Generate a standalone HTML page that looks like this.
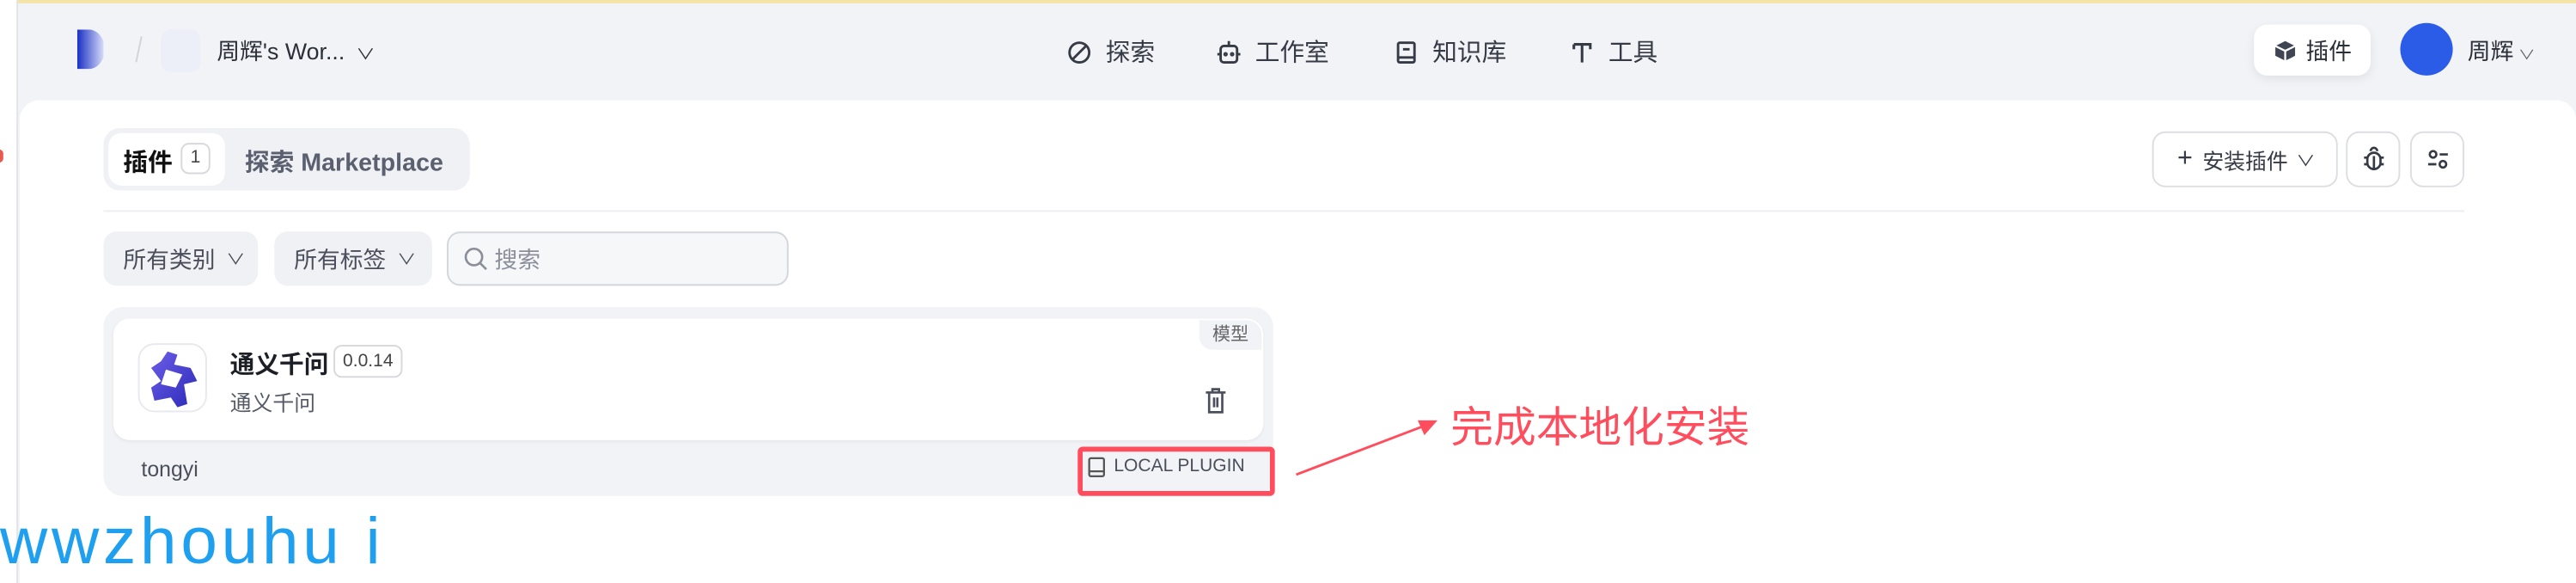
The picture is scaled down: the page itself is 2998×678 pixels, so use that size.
<!DOCTYPE html>
<html><head><meta charset="utf-8"><style>
*{margin:0;padding:0;box-sizing:border-box}
html,body{width:2998px;height:678px;overflow:hidden;background:#fff}
#w{position:absolute;left:0;top:0;width:1568px;height:355px;transform:scale(1.91199,1.9099);transform-origin:0 0;background:#f2f3f7;font-family:"Liberation Sans","Noto Sans CJK SC",sans-serif;color:#1c1f26}
.a{position:absolute}
.nav{font-size:15px;color:#353a45;display:flex;align-items:center;gap:8px}
.btn{position:absolute;background:#fff;border:1px solid #dcdee3;border-radius:8px;display:flex;align-items:center;justify-content:center;font-size:13px;color:#353a45}
.flt{position:absolute;background:#f0f1f4;border-radius:8px;font-size:14px;color:#4a4f5b;display:flex;align-items:center;padding-left:12px;gap:8px}
.chev{font-size:9px;transform:scaleX(1.3)}
</style></head><body><div id="w">
<div class="a" style="left:0;top:0;width:1568px;height:2px;background:#f3e3a6"></div>
<div class="a" style="left:0;top:0;width:11px;height:355px;background:#fff;border-right:1px solid #e3e4e8"></div>
<div class="a" style="left:-3px;top:91px;width:5px;height:8px;border-radius:3px;background:#e85a4f"></div>
<svg class="a" style="left:47px;top:18px" width="16" height="24"><defs><linearGradient id="g" x1="0" x2="1"><stop offset="0" stop-color="#1a2fc4"/><stop offset="1" stop-color="#dfe4fb"/></linearGradient></defs><path d="M0 0H7A9 11 0 0 1 7 24H0Z" fill="url(#g)"/></svg>
<div class="a" style="left:84px;top:22px;width:1px;height:16px;background:#d0d3da;transform:rotate(12deg)"></div>
<div class="a" style="left:98px;top:18px;width:24px;height:26px;border-radius:6px;background:#eceff8"></div>
<div class="a" style="left:132px;top:21px;font-size:14px;color:#2b2f38">周辉's Wor... <span class="chev" style="display:inline-block;margin-left:4px">&#8744;</span></div>
<div class="a nav" style="left:649px;top:21px"><svg width="16" height="16" viewBox="0 0 16 16" fill="none" stroke="#353a45" stroke-width="1.5"><circle cx="8" cy="8" r="6"/><path d="M4 12L12 4"/></svg>探索</div>
<div class="a nav" style="left:740px;top:21px"><svg width="16" height="16" viewBox="0 0 16 16" fill="none" stroke="#353a45" stroke-width="1.5"><rect x="3" y="4" width="10" height="10" rx="2"/><path d="M8 1v3M1 9h2M13 9h2"/><circle cx="6" cy="9" r=".6"/><circle cx="10" cy="9" r=".6"/></svg>工作室</div>
<div class="a nav" style="left:848px;top:21px"><svg width="16" height="16" viewBox="0 0 16 16" fill="none" stroke="#353a45" stroke-width="1.5"><rect x="3" y="2" width="10" height="12" rx="1"/><path d="M3 11h10M6 6h4"/></svg>知识库</div>
<div class="a nav" style="left:955px;top:21px"><svg width="16" height="16" viewBox="0 0 16 16" fill="none" stroke="#353a45" stroke-width="1.6"><path d="M3 3h10v3M3 3v3M8 3v11"/></svg>工具</div>
<div class="a" style="left:1372px;top:15px;width:71px;height:31px;background:#fff;border-radius:8px;box-shadow:0 2px 6px rgba(0,0,0,.08);display:flex;align-items:center;justify-content:center;gap:6px;font-size:14px;color:#2b2f38"><svg width="14" height="14" viewBox="0 0 14 14"><path d="M7 1l6 3v6l-6 3-6-3V4z" fill="#3f4552"/><path d="M1 4l6 3 6-3M7 7v6" stroke="#fff" stroke-width="1.2" fill="none"/></svg>插件</div>
<div class="a" style="left:1461px;top:14px;width:32px;height:32px;border-radius:50%;background:#2b5ce8"></div>
<div class="a" style="left:1502px;top:21px;font-size:14px;color:#2b2f38">周辉 <span class="chev" style="display:inline-block;color:#666;font-size:8px">&#8744;</span></div>
<div class="a" style="left:12px;top:61px;width:1556px;height:294px;background:#fff;border-radius:12px 12px 0 0"></div>
<div class="a" style="left:63px;top:78px;width:223px;height:38px;background:#f0f1f4;border-radius:10px"></div>
<div class="a" style="left:66px;top:81px;width:71px;height:32px;background:#fff;border-radius:8px"></div>
<div class="a" style="left:75px;top:88px;font-size:15px;font-weight:bold;color:#111">插件</div>
<div class="a" style="left:110px;top:87px;width:18px;height:19px;border:1px solid #d6d8dd;border-radius:5px;font-size:11px;color:#444;text-align:center;line-height:17px">1</div>
<div class="a" style="left:149px;top:88px;font-size:15px;font-weight:bold;color:#5b6070">探索 Marketplace</div>
<div class="btn" style="left:1310px;top:80px;width:113px;height:34px;gap:6px"><span style="font-size:16px">+</span>安装插件<span class="chev">&#8744;</span></div>
<div class="btn" style="left:1428px;top:80px;width:33px;height:34px"><svg width="14" height="16" viewBox="0 0 14 16" fill="none" stroke="#353a45" stroke-width="1.4"><path d="M5 3a2 2 0 0 1 4 0"/><rect x="3" y="4" width="8" height="10" rx="4"/><path d="M1 7h2M11 7h2M1 11h2M11 11h2M7 6v8"/></svg></div>
<div class="btn" style="left:1467px;top:80px;width:33px;height:34px"><svg width="14" height="14" viewBox="0 0 14 14" fill="none" stroke="#353a45" stroke-width="1.4"><circle cx="4" cy="4" r="2"/><path d="M8 4h5M1 10h5"/><circle cx="10" cy="10" r="2"/></svg></div>
<div class="a" style="left:63px;top:128px;width:1437px;height:1px;background:#eceef1"></div>
<div class="flt" style="left:63px;top:141px;width:94px;height:33px">所有类别<span class="chev">&#8744;</span></div>
<div class="flt" style="left:167px;top:141px;width:96px;height:33px">所有标签<span class="chev">&#8744;</span></div>
<div class="a" style="left:272px;top:141px;width:208px;height:33px;border:1px solid #d4d6db;border-radius:8px;background:#f6f7f9;display:flex;align-items:center;padding-left:9px;gap:4px;font-size:14px;color:#8a8f9a"><svg width="15" height="15" viewBox="0 0 15 15" fill="none" stroke="#8a8f9a" stroke-width="1.4"><circle cx="6.5" cy="6.5" r="5"/><path d="M10 10l4 4"/></svg>搜索</div>
<div class="a" style="left:63px;top:187px;width:712px;height:115px;background:#f2f3f6;border-radius:12px"></div>
<div class="a" style="left:69px;top:194px;width:700px;height:74px;background:#fff;border-radius:10px;box-shadow:0 1px 2px rgba(0,0,0,.05)"></div>
<div class="a" style="left:730px;top:195px;width:38px;height:18px;background:#f2f3f6;border-radius:0 9px 0 8px;font-size:11px;color:#666;text-align:center;line-height:18px">模型</div>
<div class="a" style="left:84px;top:209px;width:42px;height:42px;border-radius:10px;border:1px solid #e8e9ee;background:#fff"></div>
<svg class="a" style="left:88px;top:212px" width="34" height="36" viewBox="0 0 34 36"><defs><linearGradient id="q" x1="0" y1="0" x2="1" y2="1"><stop offset="0" stop-color="#6d5ee8"/><stop offset="1" stop-color="#2a2ab8"/></linearGradient></defs><path d="M14 2l6 2-2 6 10 2 4 8-8 2 2 12-6 2-4-6-10 2-2-8 6-4-6-8 6-4zM13 13l-3 9 9 2 4-8z" fill="url(#q)" fill-rule="evenodd"/></svg>
<div class="a" style="left:140px;top:211px;font-size:15px;font-weight:bold;color:#1c1f26">通义千问</div>
<div class="a" style="left:203px;top:210px;width:42px;height:20px;border:1px solid #d6d8dd;border-radius:5px;font-size:11px;color:#444;text-align:center;line-height:18px">0.0.14</div>
<div class="a" style="left:140px;top:235px;font-size:13px;color:#555a66">通义千问</div>
<svg class="a" style="left:733px;top:236px" width="14" height="16" viewBox="0 0 14 16" fill="none" stroke="#4a4f5b" stroke-width="1.4"><path d="M1 3h12M5 3V1h4v2M3 3v12h8V3M6 6v6M8 6v6"/></svg>
<div class="a" style="left:86px;top:278px;font-size:13px;color:#4a4f5b">tongyi</div>
<div class="a" style="left:656px;top:272px;width:120px;height:30px;border:3px solid #ff4d5e;border-radius:3px"></div>
<svg class="a" style="left:662px;top:278px" width="11" height="13" viewBox="0 0 11 13" fill="none" stroke="#555" stroke-width="1.2"><rect x="1" y="1" width="9" height="11" rx="1"/><path d="M1 9h9"/></svg>
<div class="a" style="left:678px;top:278px;font-size:11px;color:#4a4f5b">LOCAL PLUGIN</div>
<svg class="a" style="left:785px;top:245px" width="95" height="48"><path d="M4 44L88 12" stroke="#ff4d5e" stroke-width="1.5"/><path d="M90 11l-12 0 4 9z" fill="#ff4d5e"/></svg>
<div class="a" style="left:883px;top:240px;font-size:26px;color:#ff4d5e">完成本地化安装</div>
<div class="a" style="left:0;top:307px;font-size:40px;color:#1e9ff0;letter-spacing:2.5px;line-height:46px">wwzhouhu i</div>
</div></body></html>
